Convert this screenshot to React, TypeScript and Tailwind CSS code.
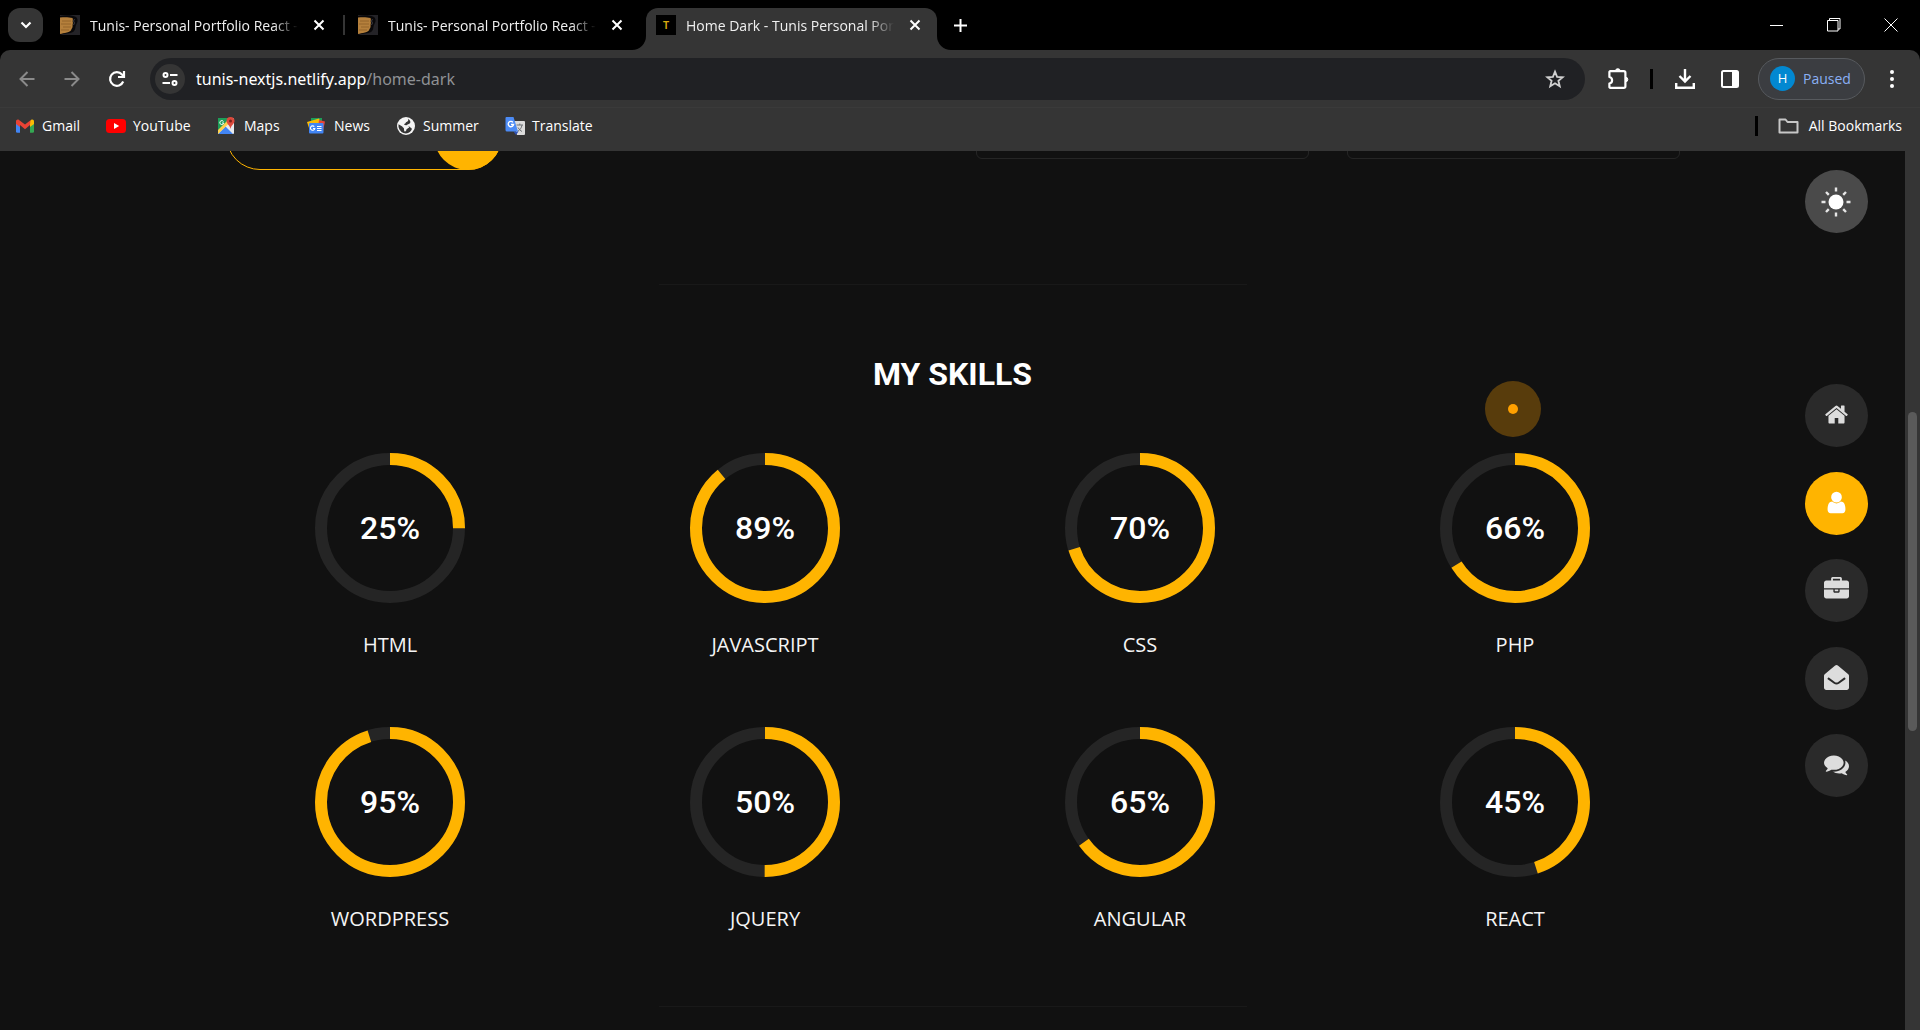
import React from "react";

const tabs = [
  { title: "Tunis- Personal Portfolio React -", kind: "face", active: false },
  { title: "Tunis- Personal Portfolio React -", kind: "face", active: false },
  { title: "Home Dark - Tunis Personal Por", kind: "letter", active: true },
];

const skills = [
  { name: "HTML", value: 25 },
  { name: "JAVASCRIPT", value: 89 },
  { name: "CSS", value: 70 },
  { name: "PHP", value: 66 },
  { name: "WORDPRESS", value: 95 },
  { name: "JQUERY", value: 50 },
  { name: "ANGULAR", value: 65 },
  { name: "REACT", value: 45 },
];

function FaceIcon() {
  return (
    <svg viewBox="0 0 20 20" className="size-5 shrink-0" aria-hidden="true">
      <rect width="20" height="20" fill="#242327" />
      <path d="M0 1C5 0 12 0 16 2c3 3 1 6 0 8s0 5-3 7c-3 2-9 1-13 3z" fill="#09080a" />
      <path d="M0 2.500C4 2 9 2 12.500 3c1 2-.5 3 .5 5-1 2 .5 4-1.500 6 0 2-2.500 3-4.500 3.500-3 .5-5 1-7 1.500z" fill="#b5803c" />
      <path d="M2 6h9M1 9h10M3 12h8M1 15h8" stroke="#94652b" strokeWidth="1" />
      <path d="M14.500 4l-1 2 1 2-1 2" stroke="#3d3c42" fill="none" />
    </svg>
  );
}

function LetterIcon() {
  return (
    <span className="flex size-5 shrink-0 items-center justify-center bg-black font-['Liberation_Sans'] text-[10px] font-bold text-[#d8a90f]">
      T
    </span>
  );
}

function CloseIcon() {
  return (
    <svg viewBox="0 0 12 12" className="size-3" fill="none" stroke="currentColor" strokeWidth="2" aria-hidden="true">
      <path d="M1.500 1.500l9 9M10.500 1.500l-9 9" />
    </svg>
  );
}

function TabStrip() {
  return (
    <div className="flex h-[50px] items-start bg-black pt-2 pl-2">
      <button aria-label="Search tabs" className="flex h-[34px] w-[35px] items-center justify-center rounded-xl bg-[#353535]">
        <svg viewBox="0 0 12 8" className="h-2 w-3" fill="none" stroke="white" strokeWidth="2.200" aria-hidden="true">
          <path d="M1.500 1.500L6 6l4.500-4.500" />
        </svg>
      </button>
      <div className="ml-[7px] flex gap-[7px]">
        {tabs.map((t, i) => (
          <div
            key={i}
            className={
              t.active
                ? "relative flex h-[42px] w-[291px] items-center rounded-t-xl bg-[#353535] pb-2 pl-[10px]"
                : "relative flex h-[42px] w-[291px] items-center pb-2 pl-[10px]"
            }
          >
            {t.kind === "face" ? <FaceIcon /> : <LetterIcon />}
            <span className="ml-[10px] w-[208px] text-[14px] whitespace-nowrap text-[#f0f0f0] [mask-image:linear-gradient(to_right,black_88%,transparent)]">
              {t.title}
            </span>
            <button aria-label="Close tab" className="ml-[11px] flex size-5 items-center justify-center text-white">
              <CloseIcon />
            </button>
            {i === 0 && <span className="absolute top-[7px] left-[293px] h-5 w-[2px] bg-[#353535]" />}
            {t.active && (
              <>
                <svg viewBox="0 0 14 14" className="absolute bottom-0 -left-[14px] size-[14px]" fill="#353535" aria-hidden="true">
                  <path d="M14 0v14H0A14 14 0 0 0 14 0z" />
                </svg>
                <svg viewBox="0 0 14 14" className="absolute -right-[14px] bottom-0 size-[14px]" fill="#353535" aria-hidden="true">
                  <path d="M0 0v14h14A14 14 0 0 1 0 0z" />
                </svg>
              </>
            )}
          </div>
        ))}
      </div>
      <button aria-label="New tab" className="ml-[13px] flex h-[34px] w-5 items-center justify-center">
        <svg viewBox="0 0 13 13" className="size-[13px]" stroke="white" strokeWidth="2" aria-hidden="true">
          <path d="M6.500 0v13M0 6.500h13" />
        </svg>
      </button>
      <div className="ml-auto flex h-[34px] pr-px">
        <button aria-label="Minimize" className="flex w-[57px] items-center justify-center">
          <span className="h-px w-[13px] bg-white" />
        </button>
        <button aria-label="Restore" className="flex w-[57px] items-center justify-center">
          <svg viewBox="0 0 14 14" className="size-[14px]" fill="none" stroke="white" aria-hidden="true">
            <path d="M.5 2.500h10.500v10.500H.5zM2.500 2V.5h10.500v10.500H11" />
          </svg>
        </button>
        <button aria-label="Close" className="flex w-[57px] items-center justify-center">
          <svg viewBox="0 0 14 14" className="size-[14px]" fill="none" stroke="white" aria-hidden="true">
            <path d="M.5.5l13 13M13.500.5l-13 13" />
          </svg>
        </button>
      </div>
    </div>
  );
}

function Toolbar() {
  return (
    <div className="bg-black">
      <div className="flex h-[58px] items-center rounded-t-[10px] border-b border-[#3a3a3a] bg-[#353535] pl-[17px]">
        <button aria-label="Back" className="flex size-5 items-center justify-center">
          <svg viewBox="0 0 16 16" className="size-4" fill="none" stroke="#8a8a8a" strokeWidth="2" aria-hidden="true">
            <path d="M15.500 8H1.500M8.500 1L1.500 8l7 7" />
          </svg>
        </button>
        <button aria-label="Forward" className="ml-[25px] flex size-5 items-center justify-center">
          <svg viewBox="0 0 16 16" className="size-4" fill="none" stroke="#8a8a8a" strokeWidth="2" aria-hidden="true">
            <path d="M.5 8h14M7.500 1l7 7-7 7" />
          </svg>
        </button>
        <button aria-label="Reload" className="ml-[25px] flex size-5 items-center justify-center">
          <svg viewBox="0 0 18 18" className="size-[18px]" fill="none" stroke="white" strokeWidth="2.200" aria-hidden="true">
            <path d="M15.200 11.500A6.800 6.800 0 1 1 14 4.500L16 6.500" />
            <path d="M16 1v6h-6" />
          </svg>
        </button>
        <div className="ml-[23px] flex h-[42px] flex-1 items-center rounded-full bg-[#202124] pr-5 pl-[5px]">
          <button aria-label="Site information" className="flex size-[30px] items-center justify-center rounded-full bg-[#353535]">
            <svg viewBox="0 0 16 14" className="h-[14px] w-4" fill="none" stroke="white" strokeWidth="2" aria-hidden="true">
              <circle cx="3.500" cy="3" r="2" />
              <path d="M8 3h7.500M.5 11H8" />
              <circle cx="12.500" cy="11" r="2" />
            </svg>
          </button>
          <a href="#home-dark" className="ml-[11px] font-['Noto_Sans',sans-serif] text-[16px] text-[#8f9194]">
            <span className="text-white">tunis-nextjs.netlify.app</span>/home-dark
          </a>
          <button aria-label="Bookmark this page" className="ml-auto">
            <svg viewBox="0 0 24 24" className="size-5" fill="none" stroke="#d0d0d0" strokeWidth="2.200" aria-hidden="true">
              <path d="M12 3.200l2.500 6.200 6.700.5-5.100 4.300 1.600 6.500L12 17.200l-5.700 3.500 1.600-6.500L2.800 9.900l6.700-.5z" />
            </svg>
          </button>
        </div>
        <button aria-label="Extensions" className="ml-[23px]">
          <svg viewBox="0 0 22 22" className="size-[22px]" fill="none" stroke="white" strokeWidth="2.200" strokeLinejoin="round" aria-hidden="true">
            <path d="M2.200 3.200h13.600a1.600 1.600 0 0 1 1.600 1.600v13.400a1.600 1.600 0 0 1-1.600 1.600H2.200a.8.800 0 0 1-.8-.8v-3.500c3.600-.6 3.600-5.900 0-6.500V4a.8.800 0 0 1 .8-.8z" />
            <path d="M7.500 3a2.300 2.300 0 0 1 4.600 0zM17.500 9.200a2.300 2.300 0 0 1 0 4.600z" fill="white" strokeWidth="1" />
          </svg>
        </button>
        <span className="ml-5 h-5 w-[3px] bg-black" />
        <button aria-label="Downloads" className="ml-[22px]">
          <svg viewBox="0 0 20 20" className="size-5" fill="none" stroke="white" strokeWidth="2.400" aria-hidden="true">
            <path d="M10 0v12M4.500 7l5.500 5.500L15.500 7M1.200 14v4.800h17.600V14" />
          </svg>
        </button>
        <button aria-label="Side panel" className="ml-[26px]">
          <svg viewBox="0 0 18 18" className="size-[18px]" aria-hidden="true">
            <rect x="1" y="1" width="16" height="16" rx="1.500" fill="none" stroke="white" strokeWidth="2" />
            <path d="M11 1h6v16h-6z" fill="white" />
          </svg>
        </button>
        <button className="ml-[19px] flex h-[42px] w-[107px] items-center rounded-full border border-[#575a5e] bg-[#3b3d41] pl-[11px] text-[14px] text-[#8ab0f4]">
          <span className="flex size-[25px] items-center justify-center rounded-full bg-[#0288d1] text-[13px] text-white">H</span>
          <span className="ml-2">Paused</span>
        </button>
        <button aria-label="Menu" className="mr-[18px] ml-[17px] flex w-5 justify-center">
          <svg viewBox="0 0 4 18" className="h-[18px] w-1" fill="white" aria-hidden="true">
            <circle cx="2" cy="2" r="2" />
            <circle cx="2" cy="9" r="2" />
            <circle cx="2" cy="16" r="2" />
          </svg>
        </button>
      </div>
    </div>
  );
}

const bookmarks = [
  {
    name: "Gmail",
    width: "w-[91px]",
    icon: (
      <>
        <path d="M1 4.500v11a1.300 1.300 0 0 0 1.300 1.300H5V8z" fill="#4285f4" />
        <path d="M19 4.500v11a1.300 1.300 0 0 1-1.300 1.300H15V8z" fill="#34a853" />
        <path d="M15 8V5l1-1c1.500-1 3-.2 3 1.500V8l-4 3z" fill="#fbbc04" />
        <path d="M1 8V5.500C1 3.700 2.800 3 4 4l6 4.600L15.500 4.300 15 9l-5 4.200L5 9v2z" fill="#ea4335" />
      </>
    ),
  },
  {
    name: "YouTube",
    width: "w-[111px]",
    icon: (
      <>
        <rect x="0" y="3" width="20" height="14" rx="3.500" fill="#f00" />
        <path d="M8 7l5.200 3L8 13z" fill="#fff" />
      </>
    ),
  },
  {
    name: "Maps",
    width: "w-[90px]",
    icon: (
      <>
        <rect x="1" y="2" width="16" height="16" rx="1" fill="#e8eaed" />
        <path d="M1 2h13L1 15z" fill="#1e9e58" />
        <path d="M1 18l7.500-7.500L16 18z" fill="#4285f4" />
        <path d="M1 14L12 3l2.500 2L1 18z" fill="#ffd04b" />
        <path d="M6.500 5.500a2 2 0 1 0 .3 1.500H5" fill="none" stroke="#fff" />
        <path d="M13.500 1a4 4 0 0 1 4 4c0 3-3.500 4-4 8-.5-4-4-5-4-8a4 4 0 0 1 4-4z" fill="#dc4a3c" />
        <circle cx="13.500" cy="5" r="1.500" fill="#7d231b" />
      </>
    ),
  },
  {
    name: "News",
    width: "w-[89px]",
    icon: (
      <>
        <path d="M4 2h11v6H4z" fill="#1e9e58" />
        <path d="M0 6l12-3.500 2 5L2 12z" fill="#fbbc04" />
        <path d="M12 4l6 1.500L16 15l-5-3z" fill="#ea4335" />
        <rect x="2" y="7" width="14.500" height="10.500" rx="1" fill="#4285f4" />
        <path d="M7.300 10.600a2.200 2.200 0 1 0 .5 1.900H6M10 10.500h4.500M10 12.500h4.500M10 14.500h4.500" fill="none" stroke="#fff" strokeWidth="1.200" />
      </>
    ),
  },
  {
    name: "Summer",
    width: "w-[109px]",
    icon: (
      <>
        <circle cx="10" cy="10" r="9" fill="#f4f4f4" />
        <path d="M12 2.800c1 2-.5 3-2 3.500-.5 1.700-1.600 1-1.800 2.700 2.300.3 4.300 0 5 2.500-1 1-3 1-3 3-1 2-2.200 1-2.200-1 .3-2-1.200-1.800-1.700-3L2.500 8.300a8 8 0 0 0 5 8.800c3 1 5.500 0 7.500-2.300 1.300-1.500 1-2.600-.6-3.200-1-1.200-2.500-1.900-4.200-2.300 1.200-1 2.800-.8 4-2.200.6-1.600-.3-3.100-2.200-4.300z" fill="#353535" />
      </>
    ),
  },
  {
    name: "Translate",
    width: "w-[90px]",
    icon: (
      <>
        <path d="M8 5h11a1 1 0 0 1 1 1v12a1 1 0 0 1-1 1h-7z" fill="#dcdcdc" />
        <path d="M11.500 9h6.500M14.800 7.500V9M13 11.500c1.500 2.500 2.500 3 4 4M17 9c-.5 3-2 5-4.500 6.500" fill="none" stroke="#6f7377" />
        <path d="M8.500 15.500h5L11 19z" fill="#3052b5" />
        <path d="M1.500 1h7L13 15.500H2A1.500 1.500 0 0 1 .5 14V2a1 1 0 0 1 1-1z" fill="#4c8bf5" />
        <path d="M8 6.300a2.700 2.700 0 1 0 .6 2.200H6" fill="none" stroke="#fff" strokeWidth="1.300" />
      </>
    ),
  },
];

function BookmarksBar() {
  return (
    <nav aria-label="Bookmarks" className="flex h-[43px] items-center bg-[#353535] pb-2 pr-[18px] pl-[15px] text-[14px] text-white">
      {bookmarks.map((b) => (
        <a key={b.name} href={"#" + b.name} className={"flex shrink-0 items-center " + b.width}>
          <svg viewBox="0 0 20 20" className="mr-[7px] size-5 shrink-0" aria-hidden="true">
            {b.icon}
          </svg>
          {b.name}
        </a>
      ))}
      <span className="ml-auto h-5 w-[3px] bg-black" />
      <a href="#all" className="ml-5 flex items-center gap-[10px]">
        <svg viewBox="0 0 21 16" className="h-4 w-[21px]" fill="none" stroke="#c7c7c7" strokeWidth="2" strokeLinejoin="round" aria-hidden="true">
          <path d="M1.500 14.500v-13h6l2 2.500h10v10.500z" />
        </svg>
        All Bookmarks
      </a>
    </nav>
  );
}

function Ring({ value }: { value: number }) {
  const length = 2 * Math.PI * 69;
  return (
    <div className="grid size-[150px] place-items-center">
      <svg viewBox="0 0 150 150" className="col-start-1 row-start-1 size-[150px] -rotate-90" fill="none" strokeWidth="12" aria-hidden="true">
        <circle cx="75" cy="75" r="69" stroke="#252525" />
        <circle cx="75" cy="75" r="69" stroke="#ffb400" strokeDasharray={`${(length * value) / 100} ${length}`} />
      </svg>
      <span className="col-start-1 row-start-1 font-['Roboto'] text-[32px] font-medium text-white">{value}%</span>
    </div>
  );
}

const navItems = [
  {
    label: "Home",
    active: false,
    d: "M1472 992v480q0 26-19 45t-45 19h-384v-384h-256v384h-384q-26 0-45-19t-19-45v-480q0-1 .5-3t.5-3l575-474 575 474q1 2 1 6zm223-69l-62 74q-8 9-21 11h-3q-13 0-21-7l-692-577-692 577q-12 8-24 7-13-2-21-11l-62-74q-8-10-7-23.500t11-21.500l719-599q32-26 76-26t76 26l244 204v-195q0-14 9-23t23-9h192q14 0 23 9t9 23v408l219 182q10 8 11 21.500t-7 23.500z",
  },
  {
    label: "About",
    active: true,
    d: "M1536 1399q0 109-62.500 187t-150.500 78h-854q-88 0-150.500-78t-62.500-187q0-85 8.500-160.500t31.500-152 58.500-131 94-89 134.500-34.500q131 128 313 128t313-128q76 0 134.500 34.500t94 89 58.500 131 31.500 152 8.500 160.500zm-256-887q0 159-112.500 271.500t-271.500 112.500-271.500-112.500-112.500-271.500 112.500-271.500 271.500-112.500 271.500 112.500 112.500 271.500z",
  },
  {
    label: "Portfolio",
    active: false,
    d: "M640 256h512v-128h-512v128zm1152 640v480q0 66-47 113t-113 47h-1472q-66 0-113-47t-47-113v-480h672v160q0 26 19 45t45 19h320q26 0 45-19t19-45v-160h672zm-768 0v128h-256v-128h256zm768-480v384h-1792v-384q0-66 47-113t113-47h352v-160q0-40 28-68t68-28h576q40 0 68 28t28 68v160h352q66 0 113 47t47 113z",
  },
  {
    label: "Contact",
    active: false,
    d: "M0 1632V768q0-70 50-110Q400 380 800 40q96-72 192 0 400 340 750 618 50 40 50 110v864q0 66-47 113t-113 47H160q-66 0-113-47t-47-113zM256 960q-22 30 8 54l430 310q202 130 404 0l430-310q30-24 8-54l-38-50q-22-26-52-6l-430 312q-120 84-240 0L346 904q-30-20-52 6z",
  },
  {
    label: "Blog",
    active: false,
    d: "M1408 768q0 139-94 257t-256.500 186.500-353.500 68.500q-86 0-176-16-124 88-278 128-36 9-86 16h-3q-11 0-20.500-8t-11.500-21q-1-3-1-6.500t.5-6.500 2-6l2.500-5 3.500-5.500 4-5 4.500-5 4-4.500q5-6 23-25t26-29.500 22.500-29 25-38.500 20.500-44q-124-72-195-177t-71-224q0-139 94-257t256.500-186.500 353.500-68.500 353.500 68.500 256.500 186.500 94 257zm384 256q0 120-71 224.500t-195 176.500q10 24 20.500 44t25 38.500 22.500 29 26 29.500 23 25q1 1 4 4.500t4.500 5 4 5 3.500 5.500l2.500 5 2 6 .5 6.500-1 6.500q-3 14-13 22t-22 7q-50-7-86-16-154-40-278-128-90 16-176 16-271 0-472-132 58 4 88 4 161 0 309-45t264-129q125-92 192-212t67-254q0-77-23-152 129 71 204 178t75 230z",
  },
];

function FloatingControls() {
  return (
    <>
      <button aria-label="Light mode" className="absolute top-[19px] right-[37px] flex size-[63px] items-center justify-center rounded-full bg-[#4a4a4a] pr-px">
        <svg viewBox="0 0 30 30" className="size-[30px]" stroke="#e6e6e6" strokeWidth="2.400" aria-hidden="true">
          <circle cx="15" cy="15" r="7.500" fill="white" stroke="none" />
          <path d="M15 .5v4M15 25.500v4M.5 15h4M25.500 15h4M5 5l2.800 2.800M22.200 22.200L25 25M5 25l2.800-2.800M22.200 7.800L25 5" />
        </svg>
      </button>
      <nav aria-label="Sections" className="absolute top-[233px] right-[37px] flex h-[413px] flex-col justify-between">
        {navItems.map((n) => (
          <a
            key={n.label}
            href={"#" + n.label}
            aria-label={n.label}
            className={
              n.active
                ? "flex size-[63px] items-center justify-center rounded-full bg-[#ffb400] text-white"
                : "flex size-[63px] items-center justify-center rounded-full bg-[#2a2a2a] text-[#dddddd]"
            }
          >
            <svg viewBox="0 0 1792 1792" className="mb-[2px] size-[25px]" fill="currentColor" fillRule={n.label === "Contact" ? "evenodd" : "nonzero"} aria-hidden="true">
              <path d={n.d} />
            </svg>
          </a>
        ))}
      </nav>
      <div className="pointer-events-none absolute top-[230px] right-[364px] flex size-14 items-center justify-center rounded-full bg-[#ffa000]/30">
        <span className="size-[10px] rounded-full bg-[#ffa000]" />
      </div>
    </>
  );
}

export default function App() {
  return (
    <div className="flex h-screen min-h-0 flex-col bg-[#111111] font-['Open_Sans',sans-serif]">
      <TabStrip />
      <Toolbar />
      <BookmarksBar />
      <div className="flex min-h-0 flex-1">
        <main className="relative min-w-0 flex-1 overflow-hidden text-white">
          <div className="mx-auto max-w-[1500px]">
            <div className="flex h-[19px] items-end overflow-hidden px-[23px]">
              <div className="flex h-[68px] w-[276px] shrink-0 justify-end rounded-full border border-[#ffb400]">
                <span className="-m-px size-[68px] rounded-full bg-[#ffb400]" />
              </div>
              <div className="mb-[11px] ml-auto h-[68px] w-[333px] shrink-0 rounded-md border border-[#252525]" />
              <div className="mb-[11px] ml-[38px] h-[68px] w-[333px] shrink-0 rounded-md border border-[#252525]" />
            </div>
            <hr className="mx-auto mt-[114px] w-[588px] border-[#191919]" />
            <h2 className="mt-[69px] text-center font-['Roboto'] text-[32px] leading-10 font-bold">MY SKILLS</h2>
            <ul className="mt-[59px] grid grid-cols-4 gap-y-[66px]">
              {skills.map((s) => (
                <li key={s.name} className="flex flex-col items-center">
                  <Ring value={s.value} />
                  <span className="mt-[25px] text-[20px] leading-[33px] text-[#f5f5f5]">{s.name}</span>
                </li>
              ))}
            </ul>
            <hr className="mx-auto mt-[71px] w-[588px] border-[#191919]" />
          </div>
          <FloatingControls />
        </main>
        <div className="w-[15px] shrink-0 bg-[#353535] pt-[261px]">
          <div className="mx-auto h-[319px] w-[9px] rounded-full bg-[#5a5a5a]" />
        </div>
      </div>
    </div>
  );
}
